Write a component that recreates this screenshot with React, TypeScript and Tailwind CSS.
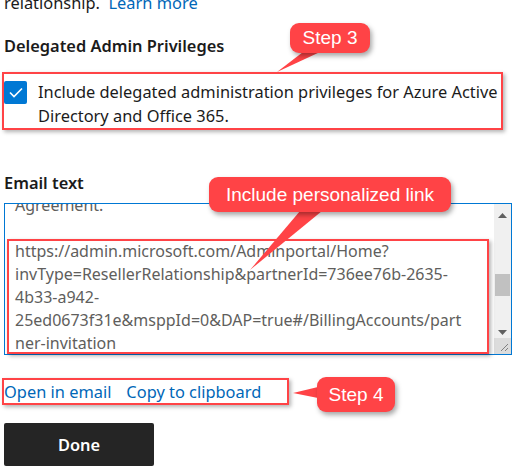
import React from 'react';

const font = "font-['Segoe_UI','Noto_Sans','Open_Sans',sans-serif]";
const calloutFont = "font-['Liberation_Sans',Arial,sans-serif]";

function Callout({ text, className }: { text: string; className: string }) {
  return (
    <div
      className={`absolute flex items-center justify-center rounded-[9px] bg-[#ff4346] text-white text-[19px] shadow-[2px_3px_5px_rgba(0,0,0,0.35)] ${calloutFont} ${className}`}
    >
      {text}
    </div>
  );
}

function Scrollbar() {
  return (
    <div className="flex w-[17px] flex-col bg-[#f0f0f0]">
      <div className="flex h-[18px] items-center justify-center pt-[4px]">
        <svg width="9" height="5" viewBox="0 0 9 5">
          <path d="M0 5 L4.5 0 L9 5 Z" fill="#606060" />
        </svg>
      </div>
      <div className="h-[52px]" />
      <div className="mx-[1px] h-[22px] bg-[#c1c1c1]" />
      <div className="h-[30px]" />
      <div className="flex h-[12px] items-center justify-center">
        <svg width="9" height="5" viewBox="0 0 9 5">
          <path d="M0 0 L4.5 5 L9 0 Z" fill="#606060" />
        </svg>
      </div>
      <div className="flex-1" />
      <div className="flex h-[16px] items-end justify-end bg-[#dcdcdc] p-[2px]">
        <svg width="10" height="10" viewBox="0 0 10 10">
          <path d="M9 2 L2 9 M9 6 L6 9" stroke="#808080" strokeWidth="1" />
        </svg>
      </div>
    </div>
  );
}

export default function App() {
  return (
    <div className={`relative h-[468px] w-[516px] overflow-hidden bg-white text-[16.4px] leading-[24px] text-[#1b1b1b] ${font}`}>
      <div className="px-[4px]">
        <p className="-mt-[9px]">
          relationship.&nbsp; <span className="text-[#0067b8]">Learn more</span>
        </p>

        <h2 className="mt-[19px] font-semibold">Delegated Admin Privileges</h2>

        <label className="mt-[22px] flex gap-[11px]">
          <span className="mt-[1px] flex h-[23px] w-[23px] shrink-0 items-center justify-center rounded-[2px] bg-[#0078d4]">
            <svg width="14" height="11" viewBox="0 0 14 11" fill="none">
              <path d="M1 5.5 L5 9.5 L13 1.5" stroke="white" strokeWidth="1.6" />
            </svg>
          </span>
          <span>
            Include delegated administration privileges for Azure Active Directory and Office 365.
          </span>
        </label>

        <h2 className="mt-[43px] font-semibold">Email text</h2>

        <div className="mt-[8px] flex h-[152px] w-[508px] border border-[#0078d4]">
          <div className="flex-1 overflow-hidden pl-[10px] pr-[6px] text-[16px] leading-[23px] text-[#605e5c]">
            <p className="-mt-[10px]">Agreement.</p>
            <p>&nbsp;</p>
            <p className="break-all">
              https://admin.microsoft.com/Adminportal/Home?
              <br />
              invType=ResellerRelationship&amp;partnerId=736ee76b-2635-
              <br />
              4b33-a942-
              <br />
              25ed0673f31e&amp;msppId=0&amp;DAP=true#/BillingAccounts/part
              <br />
              ner-invitation
            </p>
          </div>
          <Scrollbar />
        </div>

        <div className="mt-[25px] flex gap-[15px] text-[#0067b8]">
          <a>Open in email</a>
          <a>Copy to clipboard</a>
        </div>

        <button className="mt-[19px] h-[43px] w-[150px] rounded-[2px] bg-[#252525] font-semibold text-white">
          Done
        </button>
      </div>

      {/* annotation boxes */}
      <div className="pointer-events-none absolute left-[2px] top-[72px] h-[58px] w-[501px] border-[2.5px] border-[#ff4346] shadow-[2px_2px_4px_rgba(0,0,0,0.3)]" />
      <div className="pointer-events-none absolute left-[7px] top-[239px] h-[115px] w-[482px] border-[2.5px] border-[#ff4346] shadow-[2px_2px_4px_rgba(0,0,0,0.3)]" />
      <div className="pointer-events-none absolute left-[2px] top-[378px] h-[27px] w-[287px] border-[2.5px] border-[#ff4346] shadow-[2px_2px_4px_rgba(0,0,0,0.3)]" />

      {/* callout tails */}
      <svg className="pointer-events-none absolute left-0 top-0" width="516" height="468">
        <path d="M303 52 L277 72 L320 52 Z" fill="#ff4346" />
        <path d="M300 211 L250 270 L322 211 Z" fill="#ff4346" />
        <path d="M318 387 L293 393 L318 398 Z" fill="#ff4346" />
      </svg>

      <Callout text="Step 3" className="left-[290px] top-[23px] h-[30px] w-[80px]" />
      <Callout text="Include personalized link" className="left-[209px] top-[177px] h-[35px] w-[242px]" />
      <Callout text="Step 4" className="left-[317px] top-[377px] h-[35px] w-[78px]" />
    </div>
  );
}
